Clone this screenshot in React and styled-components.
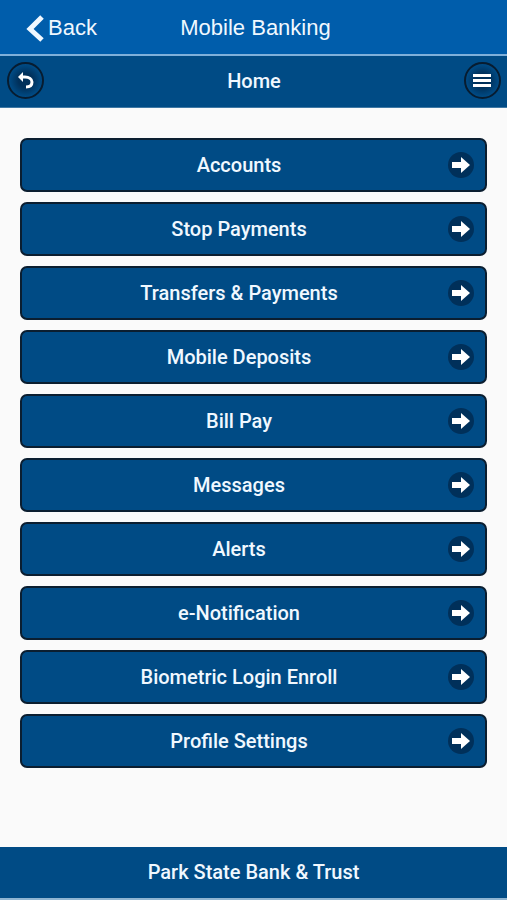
import React from "react";

import styled, { createGlobalStyle } from "styled-components";

const GlobalStyle = createGlobalStyle`
  * {
    box-sizing: border-box;
  }
  body {
    margin: 0;
    background-color: #fafafa;
    font-family: Roboto, "Liberation Sans", sans-serif;
    font-size: 20px;
    font-weight: 500;
    line-height: 24px;
    color: #f0f8ff;
  }
`;

const Page = styled.div`
  display: flex;
  flex-direction: column;
  min-height: 100vh;
`;

const TopBar = styled.header`
  display: grid;
  grid-template-columns: 1fr auto 1fr;
  align-items: center;
  height: 56px;
  padding: 1px 20px 0 24px;
  background-color: #005dab;
  border-bottom: 2px solid #7fb0da;
  font-family: "Liberation Sans", sans-serif;
  font-size: 22px;
  font-weight: 400;
`;

const BackLink = styled.a`
  display: flex;
  align-items: center;
  gap: 3px;
  color: inherit;
  text-decoration: none;
`;

const TopTitle = styled.div`
  font-size: 22px;
`;

const NavBar = styled.nav`
  display: flex;
  align-items: center;
  justify-content: space-between;
  height: 52px;
  padding: 0 6px 2px 7px;
  background-color: #004b85;
  border-bottom: 1px solid #3f78a4;
`;

const Heading = styled.h1`
  margin: 0;
  font-size: 20px;
  font-weight: 500;
`;

const RoundButton = styled.button`
  display: flex;
  align-items: center;
  justify-content: center;
  width: 37px;
  height: 37px;
  padding: 0;
  border: 2px solid #071c30;
  border-radius: 50%;
  background: radial-gradient(circle, #00305a 30%, #004b85 70%);
  color: #fff;
`;

const Menu = styled.main`
  display: flex;
  flex: 1;
  flex-direction: column;
  gap: 10px;
  padding: 30px 20px;
`;

const MenuButton = styled.button`
  display: flex;
  align-items: center;
  height: 54px;
  padding: 0 11px 0 8px;
  border: 2px solid #0b1e30;
  border-radius: 7px;
  background-color: #004b85;
  color: inherit;
  font: inherit;
`;

const Label = styled.span`
  flex: 1;
  text-align: center;
`;

const Arrow = styled.span`
  display: flex;
  align-items: center;
  justify-content: center;
  width: 26px;
  height: 26px;
  border-radius: 50%;
  background-color: #00305a;
`;

const Footer = styled.footer`
  height: 53px;
  padding: 13px 20px;
  background-color: #004b85;
  border-bottom: 2px solid #8fb5d2;
  text-align: center;
`;

const items = [
  "Accounts",
  "Stop Payments",
  "Transfers & Payments",
  "Mobile Deposits",
  "Bill Pay",
  "Messages",
  "Alerts",
  "e-Notification",
  "Biometric Login Enroll",
  "Profile Settings",
];

const App = () => {
  return (
    <Page>
      <GlobalStyle />
      <TopBar>
        <BackLink href="#back">
          <svg width="21" height="28" viewBox="0 0 21 28" fill="none" aria-hidden="true">
            <path d="M18 3 6 15l12 11" stroke="#f0f8ff" strokeWidth="5" />
          </svg>
          Back
        </BackLink>
        <TopTitle>Mobile Banking</TopTitle>
      </TopBar>
      <NavBar>
        <RoundButton type="button" aria-label="Go back">
          <svg width="18" height="20" viewBox="0 0 18 20" fill="none" aria-hidden="true">
            <path d="M4 6h4c4 0 7 2 7 5 0 3-2 5-6 5" stroke="#fff" strokeWidth="3" />
            <path d="M1 6 6 1v10z" fill="#fff" />
          </svg>
        </RoundButton>
        <Heading>Home</Heading>
        <RoundButton type="button" aria-label="Menu">
          <svg width="18" height="14" viewBox="0 0 18 14" aria-hidden="true">
            <path d="M0 0h18v3H0zM0 5h18v3H0zM0 10h18v3H0z" fill="#fff" />
          </svg>
        </RoundButton>
      </NavBar>
      <Menu>
        {items.map((item) => (
          <MenuButton type="button" key={item}>
            <Label>{item}</Label>
            <Arrow>
              <svg width="18" height="18" viewBox="0 0 18 18" aria-hidden="true">
                <path d="M0 6h9V1l9 8-9 8v-5H0z" fill="#fff" />
              </svg>
            </Arrow>
          </MenuButton>
        ))}
      </Menu>
      <Footer>Park State Bank &amp; Trust</Footer>
    </Page>
  );
};

export default App;
